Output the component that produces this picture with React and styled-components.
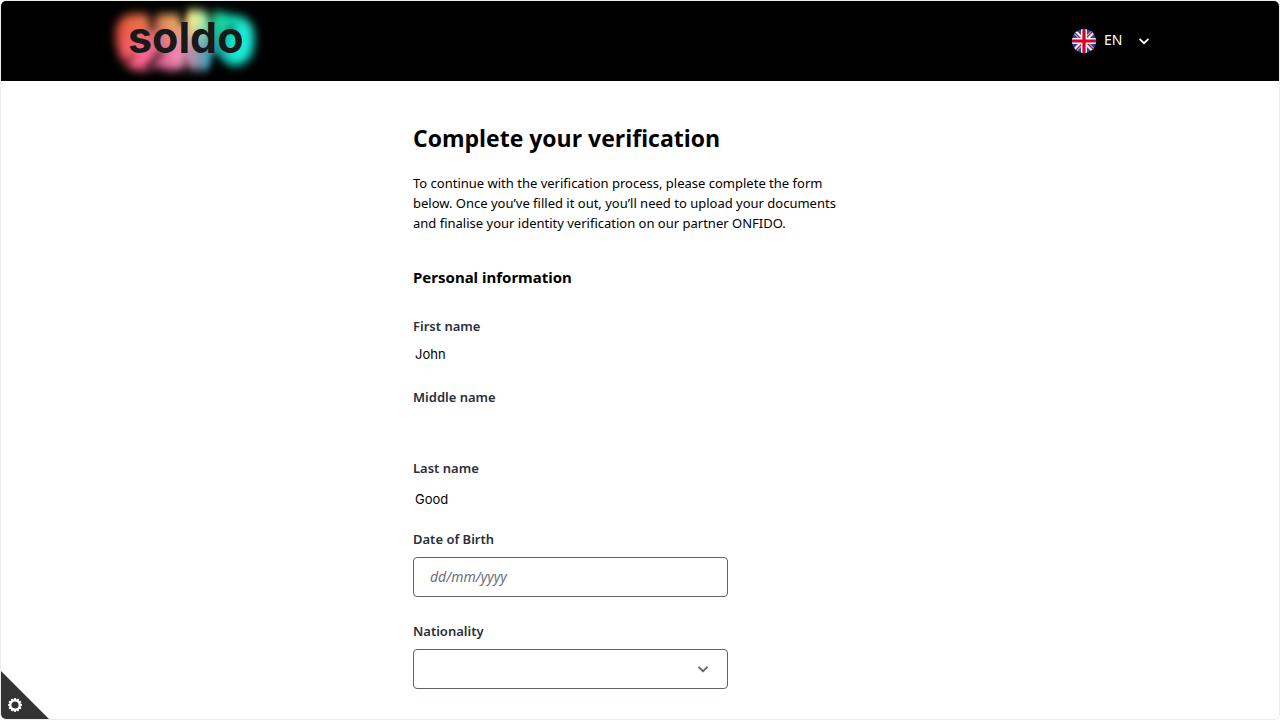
import React from "react";
import styled, { createGlobalStyle } from "styled-components";

const GlobalStyle = createGlobalStyle`
  *, *::before, *::after { box-sizing: border-box; }
  body {
    margin: 0;
    background: #fff;
    color: #000;
    font-family: "Segoe UI", "Noto Sans", sans-serif;
    font-size: 13px;
    line-height: 20px;
  }
`;

const Page = styled.div`
  position: relative;
  min-height: 100vh;
  border: 1px solid #ececec;
  border-radius: 6px;
  overflow: hidden;
`;

const Header = styled.header`
  background: #000;
`;

const HeaderInner = styled.div`
  display: flex;
  align-items: center;
  justify-content: space-between;
  max-width: 1072px;
  height: 80px;
  margin: 0 auto;
  padding: 0 24px 0 0;
`;

const HomeLink = styled.a`
  display: block;
  height: 80px;
  svg { display: block; }
`;

const LanguageButton = styled.button`
  display: flex;
  align-items: center;
  gap: 8px;
  padding: 0;
  border: 0;
  background: none;
  color: #fff;
  font: inherit;
  font-size: 14px;
  cursor: pointer;
  svg { display: block; }
`;

const LanguageCode = styled.span`
  width: 24px;
  padding-bottom: 2px;
  text-align: left;
`;

const Main = styled.main`
  max-width: 454px;
  margin: 0 auto;
  padding: 41px 0 30px;
`;

const Title = styled.h1`
  margin: 0 0 19px;
  font-family: "Segoe UI", "Open Sans", sans-serif;
  font-size: 23px;
  line-height: 32px;
  font-weight: 700;
`;

const Intro = styled.p`
  max-width: 440px;
  margin: 0 0 32px;
`;

const SectionTitle = styled.h2`
  margin: 0 0 27px;
  font-size: 15px;
  line-height: 24px;
  font-weight: 700;
`;

const Field = styled.div`
  display: flex;
  flex-direction: column;
  align-items: flex-start;
  gap: 8px;
  margin-bottom: ${(p) => p.$space}px;
`;

const Label = styled.label`
  color: #27303a;
  font-size: 13px;
  line-height: 20px;
  font-weight: 600;
`;

const PlainInput = styled.input`
  width: 315px;
  max-width: 100%;
  height: ${(p) => (p.$tall ? 27 : 21)}px;
  padding: 0 2px 2px;
  border: 0;
  background: transparent;
  color: #000;
  font-family: Inter, sans-serif;
  font-size: 13px;
`;

const BoxedInput = styled.input`
  width: 315px;
  max-width: 100%;
  height: 40px;
  padding: 0 16px 2px;
  border: 1px solid #5f616e;
  border-radius: 4px;
  background: #fff;
  font: inherit;
  font-size: 14px;
  &::placeholder {
    color: #6d6f7b;
    font-style: italic;
    opacity: 1;
  }
`;

const SelectWrap = styled.div`
  display: grid;
  align-items: center;
  width: 315px;
  max-width: 100%;
  > * { grid-area: 1 / 1; }
  svg {
    justify-self: end;
    margin-right: 17px;
    pointer-events: none;
  }
`;

const Select = styled.select`
  appearance: none;
  width: 100%;
  height: 40px;
  padding: 0 40px 0 16px;
  border: 1px solid #5f616e;
  border-radius: 4px;
  background: #fff;
  font: inherit;
  font-size: 14px;
`;

const SettingsCorner = styled.button`
  position: absolute;
  left: 0;
  bottom: 0;
  display: flex;
  align-items: flex-end;
  width: 48px;
  height: 48px;
  padding: 7px;
  border: 0;
  background: #333;
  color: #fff;
  clip-path: polygon(0 0, 100% 100%, 0 100%);
  cursor: pointer;
`;

const upperGlow = [
  [0, "#e0502f"],
  [0.18, "#ec7848"],
  [0.28, "#b06040"],
  [0.39, "#f4a860"],
  [0.48, "#d09a58"],
  [0.56, "#fbf88e"],
  [0.66, "#9cf0ae"],
  [0.72, "#18b27a"],
  [0.78, "#16e6a2"],
  [0.86, "#0fdcb8"],
  [1, "#27f3df"],
];

const lowerGlow = [
  [0, "#ee5350"],
  [0.2, "#ff6494"],
  [0.34, "#dc6492"],
  [0.46, "#f88cb6"],
  [0.56, "#b88aa8"],
  [0.66, "#4fa6bc"],
  [0.75, "#17858a"],
  [0.86, "#12e8d2"],
  [1, "#1ff0dc"],
];

function GlowGradient({ id, stops }) {
  return (
    <linearGradient id={id} gradientUnits="userSpaceOnUse" x1="117" x2="251" y1="0" y2="0">
      {stops.map(([offset, color]) => (
        <stop key={offset} offset={offset} stopColor={color} />
      ))}
    </linearGradient>
  );
}

function Logo() {
  return (
    <svg width="160" height="80" viewBox="104 1 160 80" role="img" aria-label="soldo">
      <defs>
        <filter id="glow" x="-20%" y="-40%" width="140%" height="180%" colorInterpolationFilters="sRGB">
          <feGaussianBlur stdDeviation="5" />
        </filter>
        <filter id="shade" x="-80%" y="-80%" width="260%" height="260%">
          <feGaussianBlur stdDeviation="3" />
        </filter>
        <GlowGradient id="upper" stops={upperGlow} />
        <GlowGradient id="lower" stops={lowerGlow} />
        <linearGradient id="fade" x1="0" x2="0" y1="0" y2="1">
          <stop offset="0.35" stopColor="#fff" />
          <stop offset="0.8" stopColor="#000" />
        </linearGradient>
        <mask id="upper-mask" maskUnits="userSpaceOnUse" x="104" y="1" width="160" height="60">
          <rect x="104" y="1" width="160" height="60" fill="url(#fade)" />
        </mask>
      </defs>
      <g filter="url(#glow)">
        <path
          d="M116 34Q116 15 134 14H146L151 17L157 14H177L181 17L185 10H200L211 14L217 11L230 15Q255 15 254 40Q254 65 233 66L220 61L212 70H190L184 67L178 70H166L154 66L148 70H134Q116 62 116 34Z"
          fill="url(#lower)"
        />
        <path
          d="M116 34Q116 15 134 14H146L151 17L157 14H177L181 17L185 10H200L211 14L217 11L230 15Q255 15 254 40V62H116Z"
          fill="url(#upper)"
          mask="url(#upper-mask)"
        />
      </g>
      <g filter="url(#shade)" fill="#000">
        <path d="M147 7L158 7L155 30L149 30Z" opacity=".5" />
        <path d="M179 4L187 4L184 26L180 24Z" opacity=".9" />
        <path d="M207 4L213 4L213 24L209 24Z" opacity=".5" />
        <path d="M138 54L124 70L118 64L131 54Z" opacity=".3" />
        <path d="M166 51L150 72L144 67L157 51Z" opacity=".5" />
        <path d="M184 50L191 76L184 76Z" opacity=".5" />
        <path d="M213 52L220 58L228 78L208 80Z" opacity=".9" />
        <path d="M224 28L231 22L238 29L230 34Z" opacity=".3" />
      </g>
      <text
        x="128"
        y="53"
        fill="#191919"
        fontFamily="Inter, sans-serif"
        fontSize="43"
        fontWeight="700"
      >
        soldo
      </text>
    </svg>
  );
}

function UkFlag() {
  return (
    <svg width="24" height="24" viewBox="0 0 24 24" aria-hidden="true">
      <clipPath id="flag-round">
        <circle cx="12" cy="12" r="12" />
      </clipPath>
      <g clipPath="url(#flag-round)">
        <rect width="24" height="24" fill="#0c4fb3" />
        <path d="M2 2L22 22M22 2L2 22" stroke="#f2f2f2" strokeWidth="4.2" />
        <path d="M2 3L10 11M21 2L13 10M22 21L14 13M3 22L11 14" stroke="#d80027" strokeWidth="1.4" />
        <path d="M12 0V24M0 12H24" stroke="#f2f2f2" strokeWidth="6" />
        <path d="M12 0V24M0 12H24" stroke="#d80027" strokeWidth="3.2" />
      </g>
    </svg>
  );
}

function Chevron({ color }) {
  return (
    <svg width="16" height="16" viewBox="0 0 16 16" fill="none" aria-hidden="true">
      <path d="M3.5 5.8L8 10.2L12.5 5.8" stroke={color} strokeWidth="1.8" />
    </svg>
  );
}

function Gear() {
  const teeth = Array.from({ length: 12 }, (_, i) => i * 30);
  return (
    <svg width="14" height="14" viewBox="0 0 14 14" aria-hidden="true">
      <circle cx="7" cy="7" r="4.8" fill="none" stroke="currentColor" strokeWidth="2.4" />
      {teeth.map((angle) => (
        <rect
          key={angle}
          x="6.1"
          y="0"
          width="1.8"
          height="2.4"
          fill="currentColor"
          transform={`rotate(${angle} 7 7)`}
        />
      ))}
    </svg>
  );
}

export default function App() {
  return (
    <Page>
      <GlobalStyle />
      <Header>
        <HeaderInner>
          <HomeLink href="#home">
            <Logo />
          </HomeLink>
          <LanguageButton type="button" aria-haspopup="listbox">
            <UkFlag />
            <LanguageCode>EN</LanguageCode>
            <Chevron color="#fff" />
          </LanguageButton>
        </HeaderInner>
      </Header>

      <Main>
        <Title>Complete your verification</Title>
        <Intro>
          To continue with the verification process, please complete the form below. Once you’ve
          filled it out, you’ll need to upload your documents and finalise your identity
          verification on our partner ONFIDO.
        </Intro>

        <form>
          <SectionTitle>Personal information</SectionTitle>
          <Field $space={22}>
            <Label htmlFor="first-name">First name</Label>
            <PlainInput id="first-name" type="text" defaultValue="John" />
          </Field>
          <Field $space={22}>
            <Label htmlFor="middle-name">Middle name</Label>
            <PlainInput id="middle-name" type="text" />
          </Field>
          <Field $space={16}>
            <Label htmlFor="last-name">Last name</Label>
            <PlainInput id="last-name" type="text" defaultValue="Good" $tall />
          </Field>
          <Field $space={24}>
            <Label htmlFor="birth-date">Date of Birth</Label>
            <BoxedInput id="birth-date" type="text" placeholder="dd/mm/yyyy" />
          </Field>
          <Field $space={0}>
            <Label htmlFor="nationality">Nationality</Label>
            <SelectWrap>
              <Select id="nationality" defaultValue="">
                <option value="" />
              </Select>
              <Chevron color="#5f616e" />
            </SelectWrap>
          </Field>
        </form>
      </Main>

      <SettingsCorner type="button" aria-label="Settings">
        <Gear />
      </SettingsCorner>
    </Page>
  );
}
